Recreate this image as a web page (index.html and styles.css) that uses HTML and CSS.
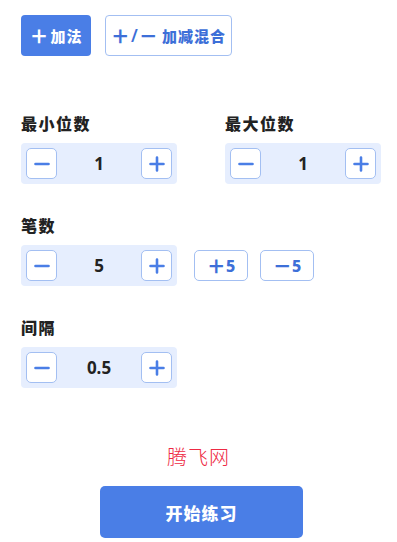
FILE: index.html
```html
<!DOCTYPE html>
<html lang="zh">
<head>
<meta charset="utf-8">
<link rel="stylesheet" href="styles.css">
</head>
<body>
<div class="page">
  <div class="modes">
    <button class="mode mode-active"><span class="sym">＋</span>加法</button>
    <button class="mode mode-outline"><span class="sym">＋</span><span class="slash">/</span><span class="sym">－</span>&nbsp;加减混合</button>
  </div>

  <div class="row-two">
    <div class="field">
      <div class="label">最小位数</div>
      <div class="stepper">
        <span class="step-btn"><svg width="16" height="16" viewBox="0 0 16 16"><path d="M1.5 8h13" stroke="#4a7ee6" stroke-width="2.6" stroke-linecap="round"/></svg></span>
        <span class="value">1</span>
        <span class="step-btn"><svg width="16" height="16" viewBox="0 0 16 16"><path d="M1.5 8h13M8 1.5v13" stroke="#4a7ee6" stroke-width="2.6" stroke-linecap="round"/></svg></span>
      </div>
    </div>
    <div class="field">
      <div class="label">最大位数</div>
      <div class="stepper">
        <span class="step-btn"><svg width="16" height="16" viewBox="0 0 16 16"><path d="M1.5 8h13" stroke="#4a7ee6" stroke-width="2.6" stroke-linecap="round"/></svg></span>
        <span class="value">1</span>
        <span class="step-btn"><svg width="16" height="16" viewBox="0 0 16 16"><path d="M1.5 8h13M8 1.5v13" stroke="#4a7ee6" stroke-width="2.6" stroke-linecap="round"/></svg></span>
      </div>
    </div>
  </div>

  <div class="field section">
    <div class="label">笔数</div>
    <div class="inline">
      <div class="stepper">
        <span class="step-btn"><svg width="16" height="16" viewBox="0 0 16 16"><path d="M1.5 8h13" stroke="#4a7ee6" stroke-width="2.6" stroke-linecap="round"/></svg></span>
        <span class="value">5</span>
        <span class="step-btn"><svg width="16" height="16" viewBox="0 0 16 16"><path d="M1.5 8h13M8 1.5v13" stroke="#4a7ee6" stroke-width="2.6" stroke-linecap="round"/></svg></span>
      </div>
      <div class="quick">
        <button class="quick-btn"><span class="sym">＋</span>5</button>
        <button class="quick-btn"><span class="sym">－</span>5</button>
      </div>
    </div>
  </div>

  <div class="field section">
    <div class="label">间隔</div>
    <div class="stepper">
      <span class="step-btn"><svg width="16" height="16" viewBox="0 0 16 16"><path d="M1.5 8h13" stroke="#4a7ee6" stroke-width="2.6" stroke-linecap="round"/></svg></span>
      <span class="value">0.5</span>
      <span class="step-btn"><svg width="16" height="16" viewBox="0 0 16 16"><path d="M1.5 8h13M8 1.5v13" stroke="#4a7ee6" stroke-width="2.6" stroke-linecap="round"/></svg></span>
    </div>
  </div>

  <div class="brand">腾飞网</div>

  <div class="start-wrap">
    <button class="start">开始练习</button>
  </div>
</div>
</body>
</html>
```

FILE: styles.css
```css
* { box-sizing: border-box; }
html, body { margin: 0; padding: 0; background: #ffffff; }
body {
  font-family: "Noto Sans CJK SC", "Noto Sans", sans-serif;
  color: #222;
}
.page {
  padding: 15px 21px 0 21px;
}
.modes {
  display: flex;
  gap: 14px;
  height: 41px;
}
.mode {
  height: 41px;
  border-radius: 4px;
  font-family: "Noto Sans CJK SC", sans-serif;
  font-weight: 900;
  font-size: 15px;
  letter-spacing: 1px;
  padding: 0;
  display: flex;
  align-items: center;
  justify-content: center;
}
.sym {
  font-family: "Noto Sans CJK SC", sans-serif;
  font-weight: 900;
  font-size: 19px;
  line-height: 1;
  letter-spacing: 0;
}
.slash {
  font-family: "Noto Sans", sans-serif;
  font-weight: 600;
  font-size: 17px;
  line-height: 1;
  letter-spacing: 0;
  margin: 0 1px;
}
.mode-active {
  width: 70px;
  background: #4a7ee6;
  color: #fff;
  border: none;
}
.mode-active .sym { margin-right: 2px; }
.mode-outline {
  width: 127px;
  background: #fff;
  color: #3d6fd8;
  border: 1.5px solid #a3bff2;
}
.row-two {
  display: flex;
  gap: 48px;
  margin-top: 56px;
}
.field { display: flex; flex-direction: column; }
.section { margin-top: 30px; }
.label {
  font-size: 16px;
  font-weight: 900;
  line-height: 22px;
  letter-spacing: 1.5px;
  color: #222;
  margin-bottom: 9px;
}
.stepper {
  width: 156px;
  height: 41px;
  padding: 5px;
  background: #e6eefe;
  border-radius: 4px;
  display: flex;
  align-items: center;
}
.step-btn {
  width: 31px;
  height: 31px;
  background: #fff;
  border: 1.5px solid #a3bff2;
  border-radius: 5px;
  display: flex;
  align-items: center;
  justify-content: center;
  flex: none;
}
.step-btn svg { display: block; }
.value {
  flex: 1;
  text-align: center;
  font-family: "Noto Sans", "Liberation Sans", sans-serif;
  font-weight: 700;
  font-size: 17px;
  color: #222;
}
.inline {
  display: flex;
  align-items: center;
  gap: 17px;
}
.quick { display: flex; gap: 12px; }
.quick-btn {
  width: 54px;
  height: 31px;
  padding: 0;
  background: #fff;
  border: 1.5px solid #a3bff2;
  border-radius: 5px;
  color: #3d6fd8;
  font-family: "Noto Sans", sans-serif;
  font-weight: 800;
  font-size: 16px;
  display: flex;
  align-items: center;
  justify-content: center;
}
.brand {
  margin-top: 55px;
  text-align: center;
  font-family: "Noto Sans CJK SC", sans-serif;
  font-weight: 300;
  font-size: 20px;
  line-height: 28px;
  color: #ee2a44;
  letter-spacing: 1px;
}
.start-wrap {
  display: flex;
  justify-content: center;
  padding-left: 6px;
  margin-top: 15px;
}
.start {
  width: 203px;
  height: 52px;
  background: #4a7ee6;
  color: #fff;
  border: none;
  border-radius: 5px;
  font-family: "Noto Sans CJK SC", sans-serif;
  font-weight: 900;
  font-size: 17px;
  letter-spacing: 1px;
}
```
